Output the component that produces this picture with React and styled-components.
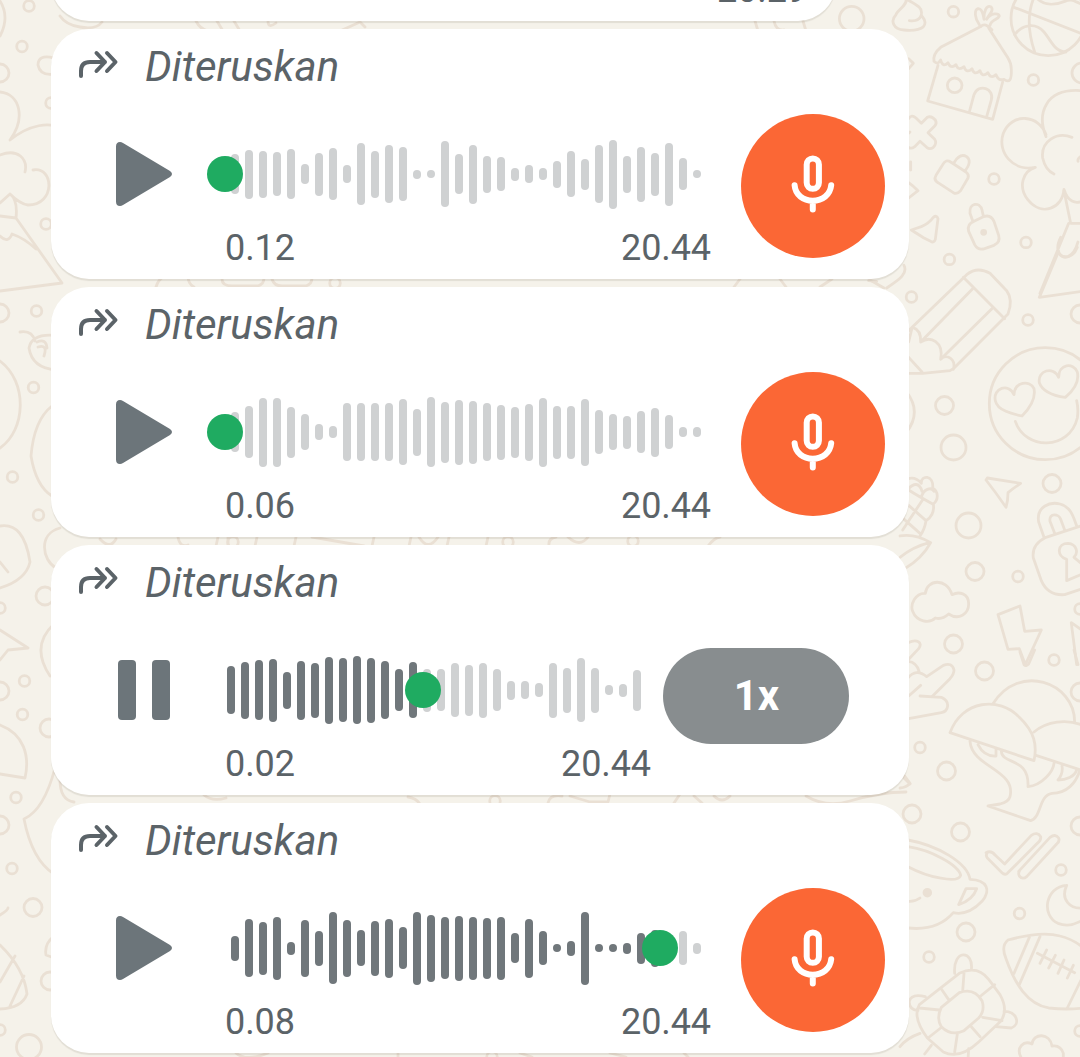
import React from 'react';
import styled, { createGlobalStyle } from 'styled-components';

const messages = [
	{
		id: 1,
		elapsed: '0.12',
		sentAt: '20.44',
		played: 0,
		knob: 0,
		bars: [
			40, 49, 47, 44, 50, 20, 43, 52, 18, 62, 47, 58, 54, 9, 8, 66, 40, 59, 37,
			34, 13, 18, 12, 27, 46, 31, 58, 69, 37, 55, 43, 63, 32, 8
		]
	},
	{
		id: 2,
		elapsed: '0.06',
		sentAt: '20.44',
		played: 0,
		knob: 0,
		bars: [
			40, 52, 69, 69, 51, 36, 16, 12, 58, 58, 58, 58, 66, 47, 70, 61, 65, 63,
			58, 55, 51, 57, 69, 53, 53, 67, 44, 36, 33, 42, 49, 34, 10, 10
		]
	},
	{
		id: 3,
		elapsed: '0.02',
		sentAt: '20.44',
		playing: true,
		played: 14,
		knob: 198,
		bars: [
			48, 57, 60, 63, 37, 59, 55, 67, 64, 68, 65, 58, 42, 56, 43, 42, 54, 51,
			55, 42, 19, 18, 14, 55, 45, 64, 45, 10, 13, 41
		]
	},
	{
		id: 4,
		elapsed: '0.08',
		sentAt: '20.44',
		played: 32,
		knob: 435,
		bars: [
			25, 58, 53, 63, 13, 57, 35, 72, 57, 36, 55, 59, 42, 73, 67, 62, 65, 63,
			61, 63, 30, 59, 34, 8, 15, 73, 8, 8, 11, 31, 37, 20, 34, 11
		]
	}
];

const dots = [
	[851.7, 18.7, 12.3], [953.4, 11.7, 5.3], [1033.4, 80, 5.3], [1082, 73, 10],
	[994, 179, 5.3], [1026, 242.4, 5.3], [949.4, 259.4, 5.3], [911.5, 297, 5.3],
	[1028, 320, 5.3], [1080, 314, 9], [944.5, 405.5, 9], [953.5, 447.5, 12.5],
	[1052, 483.5, 9], [968.5, 525.5, 12.5], [975, 571.5, 9], [1018, 576.5, 5.3],
	[1080, 609, 5.3], [953.5, 644, 9], [1054, 660, 5.3], [984.5, 671, 9],
	[1080, 692, 9], [920, 747.5, 5.3], [946.5, 771, 9], [912, 814, 9],
	[960.5, 832, 9], [1080, 826, 9], [1061, 870, 5.3], [1019.5, 913.5, 5.3],
	[966, 932, 9], [929, 957, 5.3], [1080, 1031, 5.3],
	[29, 6, 5.3], [22, 46.5, 5.3], [0, 73, 9], [51, 103, 5.3], [46, 224, 5.3],
	[36.5, 311, 5.3], [0, 313, 9], [33.5, 387.5, 5.3], [12.5, 477, 5.3],
	[38.5, 515, 5.3], [45, 596, 9], [0, 608, 5.3], [24.5, 681, 5.3], [0, 691, 9],
	[22.5, 714.5, 5.3], [49, 728, 9], [16, 797.5, 5.3], [0, 825, 9],
	[12, 868.5, 5.3], [33, 907.5, 9], [50, 981, 9], [0, 1030, 5.3],
	[29, 1047, 12.5], [335, 283, 5.3], [233, 542, 5.3], [508, 542, 5.3],
	[633, 541, 5.3], [495, 801, 5.3], [492, 1057, 5.3]
];

const Wallpaper = () => (
	<Doodles viewBox="0 0 1080 1057" aria-hidden="true">
		{dots.map(([x, y, r]) => (
			<circle key={`${x}-${y}`} cx={x} cy={y} r={r} />
		))}

		{/* hut, basketball, tree, locks */}
		<g transform="translate(700 0) scale(.33333)">
			<path d="M617 -8C628 12 592 30 588 44C570 62 580 88 612 90C640 94 675 88 675 68C676 54 662 50 664 42C668 22 648 14 624 0M628 62Q656 66 664 46" />
			<path d="M838 82L722 142Q698 162 702 184Q714 196 722 180Q728 204 744 188Q752 208 768 194Q774 214 792 200Q800 222 816 206Q822 228 840 212Q846 234 864 218Q872 238 888 224Q896 244 912 238Q936 256 934 208Q934 190 924 174L866 84" />
			<path d="M842 80Q856 66 876 90M838 74C824 56 822 30 834 26C848 24 850 48 852 58C850 36 860 14 872 20C886 30 862 48 860 58C874 36 896 40 898 48C894 60 874 58 870 76" />
			<path d="M714 196L683 303L878 358L908 246M808 336L822 284C836 248 884 266 874 300L860 350" />
			<circle cx="764" cy="256" r="22" />
			<circle cx="1045" cy="55" r="112" />
			<path d="M942 22L1148 102M1003 -10C978 46 988 108 1004 156M944 104C966 74 1006 66 1032 96C1054 122 1064 156 1098 156M1010 -6C1034 20 1070 14 1094 4S1124 6 1150 14" />
			<path d="M1038 410C1010 340 1036 264 1144 272M1038 404C1018 344 936 336 910 400C890 456 940 516 1006 502C970 512 952 560 984 600C1026 652 1088 624 1092 568C1104 606 1126 612 1146 604M1116 412C1070 394 1022 424 1028 474Q1036 510 1062 522M1148 466Q1132 474 1134 484" />
			<path d="M1092 572L1112 670H1148M1106 670L1020 880M1082 712C1062 752 1080 776 1104 770Q1124 762 1134 726" />
			<path d="M626 356Q634 342 648 354L664 370L682 352Q694 346 706 360Q712 370 704 378L684 398L704 418Q712 430 700 442Q690 450 680 442L660 424L644 440Q634 448 626 442M626 400L630 396M626 176L640 190L626 206" />
			<path d="M752 486Q738 476 728 494L708 526Q700 540 714 548L760 578Q772 584 782 572L804 534Q808 524 798 516ZM762 488Q780 458 800 470Q818 484 794 514" />
			<path d="M822 664Q800 672 806 694L824 734Q834 752 854 746L882 736Q902 726 896 706L882 664Q872 642 850 650ZM818 662L810 640C806 608 840 604 846 630L850 648" />
			<circle className="filled" cx="851" cy="697" r="6" />
			<path d="M634 690L664 680Q688 670 700 652Q710 644 714 656L706 718Q702 730 692 724L672 714ZM626 548Q640 558 654 572L626 594M632 486V510M612 796C624 820 600 838 560 864M530 844L506 842" />
		</g>

		{/* pencil, smiley, cob, padlock */}
		<g transform="translate(900 250) scale(.33333)">
			<path d="M24 244L200 74Q232 48 270 70L320 122Q340 150 324 192L160 356L150 362L68 370H24M190 82L314 206M218 116L62 276M278 174L122 328M38 232Q64 240 62 276C92 256 132 276 122 328C138 310 170 326 160 358M24 320L66 366M36 234L26 276M20 426Q66 486 20 546" />
			<circle cx="436" cy="461" r="168" />
			<path d="M342 434C326 398 278 414 286 452C292 482 338 492 366 498C390 474 408 446 402 416C390 390 344 394 342 434ZM476 382C460 346 412 362 418 398C428 426 468 438 496 442C522 420 538 392 532 366C520 336 476 342 476 382ZM346 514C376 602 508 602 532 504Q536 478 530 452" />
			<path d="M262 684L362 700Q338 716 324 728Q324 752 318 772Q288 728 258 690ZM476 4L418 142L548 124M474 4C490 34 522 20 532 -8" />
			<path d="M24 686Q48 680 64 700C62 674 102 674 98 714C116 724 116 750 100 762C104 786 92 804 78 812Q74 838 60 858M26 716C40 700 58 696 66 724M64 742C70 716 94 710 102 724M26 720Q54 738 98 762M26 766L78 812M10 806L60 850M70 746L8 840M0 858Q44 850 92 878Q66 926 14 956M0 922Q40 890 88 878" />
			<path d="M432 862L416 816C408 770 450 754 480 762C512 770 520 800 530 828M464 850L450 814C446 786 478 792 482 808L494 840M548 826L438 862Q394 884 400 924L424 992Q444 1038 494 1034L548 1016M500 992V928C468 918 472 880 504 880C530 882 536 908 522 922L548 944M500 992L548 972" />
			<path d="M76 1030C46 1028 30 1064 38 1084C50 1116 88 1122 106 1104Q126 1110 146 1092C176 1112 206 1092 206 1062C206 1028 176 1024 156 1034C140 982 80 988 76 1030ZM294 1094L360 1068L374 1144L424 1140L376 1244L358 1196L324 1198ZM514 1120L530 1244M514 1118L548 1142M24 1178C50 1166 70 1176 56 1196L24 1230" />
		</g>

		{/* hand, umbrella stand, cup, ball, turtle */}
		<g transform="translate(900 650) scale(.33333)">
			<path d="M24 84Q48 54 80 80L130 46Q156 36 162 60Q162 72 150 86L98 138M24 34C46 36 54 50 58 66M26 138L62 106M60 138L124 142C154 156 144 184 124 188L26 206M360 6L372 44Q378 50 386 42L404 0M522 0L534 44" />
			<path d="M150 248C186 150 298 138 358 202C404 246 412 286 402 332ZM280 160C356 38 524 96 524 216M402 246C440 214 500 206 548 226M408 316L548 362M210 274C216 352 350 360 330 440Q326 456 300 462L264 468L392 512C424 504 416 436 456 430C500 430 528 400 540 360M234 284Q252 320 288 318L288 298M304 304C308 346 388 320 384 410C426 406 460 364 462 340M486 348Q490 370 474 390C498 390 524 380 530 360" />
			<path d="M258 608Q274 600 286 616L314 642L394 556Q412 544 422 560Q424 570 412 580L322 670Q314 676 306 668L262 624Q256 616 262 608ZM356 664L450 562Q466 550 476 564Q480 574 470 582L380 680Q368 690 358 678Q354 670 358 664" />
			<path d="M24 570C112 586 202 638 210 688C262 690 274 720 246 754Q204 798 160 788C124 830 78 840 24 834M24 590C94 600 176 646 182 676C174 702 84 682 24 650M198 716H230Q218 750 176 764ZM24 754Q44 756 60 744" />
			<circle className="filled" cx="82" cy="728" r="10" />
			<path d="M500 706C436 710 422 796 474 820Q510 834 548 810M500 706C480 750 512 778 548 774M324 870Q424 842 480 858Q516 866 548 892M324 870Q302 888 318 926C346 1004 382 1062 446 1074Q502 1080 548 1074M388 862L342 970M420 860L358 1004M412 910L524 968M440 900L420 940M466 916L446 954M492 930L474 970M520 946L502 984M548 980L502 1074" />
			<path d="M178 970Q232 944 266 988L300 1034Q326 1080 302 1114L236 1176Q178 1230 130 1206L82 1164Q36 1102 58 1064ZM164 970C158 896 222 900 214 960M192 970L188 1024M122 1014L148 1052M58 1074L118 1080M84 1164L122 1134M172 1152L164 1206M212 1128L240 1160M248 1102L306 1112M242 1038L284 1004M178 1028Q222 1012 246 1052Q256 1082 236 1104L192 1142Q154 1160 124 1130Q108 1106 124 1072ZM312 1084C352 1084 362 1124 334 1134L288 1130M76 1040Q34 1030 28 1054Q26 1078 54 1082M60 1150Q20 1164 0 1190M94 1186L74 1212M206 1196L204 1230" />
			<path d="M364 1224C346 1192 372 1170 396 1182C400 1148 450 1148 456 1188Q482 1184 490 1210V1226M0 414Q20 412 30 400L14 378" />
		</g>

		{/* left edge */}
		<path d="M0 1Q10 17 0 36M54 58Q38 54 38 65Q40 76 54 74M0 92C20 94 26 118 10 140C30 124 50 122 60 128M0 155C18 148 28 159 25 172M33 170C54 166 56 205 28 205Q20 204 10 194L0 203M10 194Q18 200 16 218L0 216M16 218L62 283L0 291M0 236Q8 244 12 234Q24 238 36 249M0 361C28 382 26 430 0 448M20 332Q32 330 35 341M60 336Q32 332 29 348Q32 368 56 370M37 342Q46 338 47 348M38 347Q48 344 44 356M52 406Q34 420 31 456Q36 486 52 496M0 526Q24 522 30 562Q26 580 0 588M0 562L8 572M60 528C38 534 42 560 56 568M0 630L28 648L8 650L0 660M54 624Q30 646 50 676M0 725C24 734 30 756 25 778L0 774M55 768Q44 810 24 819Q32 860 54 874M0 915Q8 910 8 908M0 945Q24 968 27 994Q22 1008 0 1009M15 956L0 982M24 976L10 1006M54 936Q44 944 46 955L54 958" />
		{/* parts seen in the gaps between bubbles */}
		<path d="M60 16Q66 25 80 27Q96 30 102 22M196 21Q200 29 208 31M217 21L223 31M234 21L240 31M268 21Q268 29 276 23M340 31L360 22L365 27M755 21L758 31M774 21Q776 31 784 30M803 21L806 31M156 287Q158 280 164 276M188 276Q188 284 194 287M222 279Q222 286 232 286H258Q264 284 264 278M272 279Q274 286 282 286H306Q312 284 312 278M734 287L740 279M780 279L786 287M820 287L832 279M870 280L884 288M218 537L216 546M257 537L255 546M296 537L294 546M312 537L364 546M374 537L372 546M411 537L409 546M419 537Q428 552 438 537M449 537L447 546M488 537L486 546M549 546Q548 538 556 537M568 537Q580 548 588 537M708 546Q714 538 720 537M100 539Q110 550 116 539M178 537Q180 548 188 545M228 537V545M60 780Q60 800 74 802M204 795Q212 802 226 798M408 797Q416 798 420 804M548 803Q550 794 562 796M570 796L590 802H608L610 794M674 803L680 794M694 796L702 803M714 796Q722 804 730 796M806 796Q826 808 850 801Q880 792 906 792M902 776L910 784M236 1053Q246 1062 268 1053M398 1053V1057M520 1053L532 1057M610 1053L626 1057M684 1053L688 1057" />
	</Doodles>
);

const ForwardIcon = () => (
	<ForwardSvg viewBox="0 0 44 32">
		<path d="M4 26V21Q4 12 13 12H28M19.500 3L28 12L19.500 21M30 3L38.500 12L30 21" />
	</ForwardSvg>
);

const PlayIcon = () => (
	<svg width="60" height="68" viewBox="0 0 60 68">
		<path
			fill="#6c757a"
			d="M2 6.500Q2 2 6 2Q7.500 2 9 3L56 31Q58 32.300 58 34T56 37L9 65Q7.500 66 6 66Q2 66 2 61.500Z"
		/>
	</svg>
);

const MicIcon = () => (
	<MicSvg viewBox="0 0 48 64">
		<rect x="17.700" y="4.400" width="12.200" height="30.400" rx="6.100" />
		<path d="M5.600 31.300C6.400 41 14.300 46.800 23.800 46.800S41.200 41 42.200 31.300M23.800 47V55.600" />
	</MicSvg>
);

const VoiceMessage = ({ message }) => (
	<Bubble>
		<Forwarded>
			<ForwardIcon />
			Diteruskan
		</Forwarded>
		<Player>
			<Control aria-label={message.playing ? 'Jeda' : 'Putar'}>
				{message.playing ? (
					<>
						<PauseBar />
						<PauseBar />
					</>
				) : (
					<PlayIcon />
				)}
			</Control>
			<Track $short={message.playing}>
				<Wave $short={message.playing}>
					{message.bars.map((height, i) => (
						<Bar key={i} $played={i < message.played} style={{ height }} />
					))}
					<Knob style={{ left: message.knob }} />
				</Wave>
				<Times>
					<span>{message.elapsed}</span>
					<span>{message.sentAt}</span>
				</Times>
			</Track>
			{message.playing ? (
				<Speed>1x</Speed>
			) : (
				<Avatar>
					<MicIcon />
				</Avatar>
			)}
		</Player>
	</Bubble>
);

const App = () => (
	<>
		<GlobalStyle />
		<Page>
			<Wallpaper />
			<Chat>
				<PreviousBubble>
					<span>20.29</span>
				</PreviousBubble>
				{messages.map(message => (
					<VoiceMessage key={message.id} message={message} />
				))}
			</Chat>
		</Page>
	</>
);
export default App;

const GlobalStyle = createGlobalStyle`
	body {
		margin: 0;
		background: #f5f2ea;
		font-family: Roboto, sans-serif;
		overflow: hidden;
	}
`;

const Page = styled.main`
	position: relative;
	width: 1080px;
	height: 1057px;
	overflow: hidden;
	background: #f5f2ea;
`;

const Doodles = styled.svg`
	position: absolute;
	inset: 0;
	width: 1080px;
	height: 1057px;

	circle,
	path {
		fill: none;
		stroke: #eae0d4;
		stroke-width: 2.8px;
		stroke-linecap: round;
		stroke-linejoin: round;
		vector-effect: non-scaling-stroke;
	}
	.filled {
		fill: #eae0d4;
	}
`;

const Chat = styled.div`
	position: relative;
	display: flex;
	flex-direction: column;
	gap: 8px;
	padding-left: 51px;
`;

const Bubble = styled.article`
	box-sizing: border-box;
	flex: none;
	width: 858px;
	height: 250px;
	border-radius: 38px;
	background: #fff;
	box-shadow: 0 2px 1px rgba(60, 50, 30, 0.1);
`;

const PreviousBubble = styled(Bubble)`
	display: flex;
	align-items: flex-end;
	justify-content: flex-end;
	width: 785px;
	height: 90px;
	margin-top: -69px;
	padding: 0 29px 10px 0;
	color: #5b6368;
	font-size: 36px;
	line-height: 42px;
	letter-spacing: -0.1px;
`;

const Forwarded = styled.header`
	display: flex;
	align-items: center;
	height: 74px;
	padding-left: 26px;
	color: #5b6368;
	font-size: 42px;
	font-style: italic;
`;

const ForwardSvg = styled.svg`
	width: 44px;
	height: 32px;
	margin-right: 24px;
	fill: none;
	stroke: #5b6368;
	stroke-width: 4px;
	stroke-linecap: round;
	stroke-linejoin: round;
`;

const Player = styled.div`
	display: flex;
	align-items: flex-start;
	height: 176px;
`;

const Control = styled.button`
	display: flex;
	align-items: center;
	justify-content: center;
	gap: 16px;
	width: 60px;
	height: 142px;
	margin: 0 51px 0 63px;
	padding: 0;
	border: 0;
	background: none;
`;

const PauseBar = styled.span`
	width: 18px;
	height: 60px;
	border-radius: 4px;
	background: #6c757a;
`;

const Track = styled.div`
	width: ${props => (props.$short ? '426px' : '486px')};
`;

const Wave = styled.div`
	position: relative;
	display: flex;
	align-items: center;
	gap: 6px;
	height: 142px;
	padding-left: ${props => (props.$short ? '2px' : '6px')};
`;

const Bar = styled.span`
	flex: none;
	width: 8px;
	border-radius: 4px;
	background: ${props => (props.$played ? '#70777b' : '#cfd1d2')};
`;

const Knob = styled.span`
	position: absolute;
	top: 53px;
	width: 36px;
	height: 36px;
	margin-left: -18px;
	border-radius: 50%;
	background: #1fab61;
`;

const Times = styled.div`
	display: flex;
	justify-content: space-between;
	margin-top: -18px;
	color: #5b6368;
	font-size: 36px;
	line-height: 42px;
	letter-spacing: -0.1px;
`;

const Avatar = styled.div`
	display: flex;
	align-items: center;
	justify-content: center;
	width: 144px;
	height: 144px;
	margin: 11px 0 0 30px;
	border-radius: 50%;
	background: #fb6735;
`;

const MicSvg = styled.svg`
	width: 48px;
	height: 64px;
	fill: none;
	stroke: #fff;
	stroke-width: 6px;
	stroke-linecap: round;
`;

const Speed = styled.button`
	width: 186px;
	height: 96px;
	margin: 29px 0 0 12px;
	padding: 0 0 2px 1px;
	border: 0;
	border-radius: 48px;
	background: #888d8f;
	color: #fff;
	font-family: inherit;
	font-size: 42px;
	font-weight: 700;
`;
